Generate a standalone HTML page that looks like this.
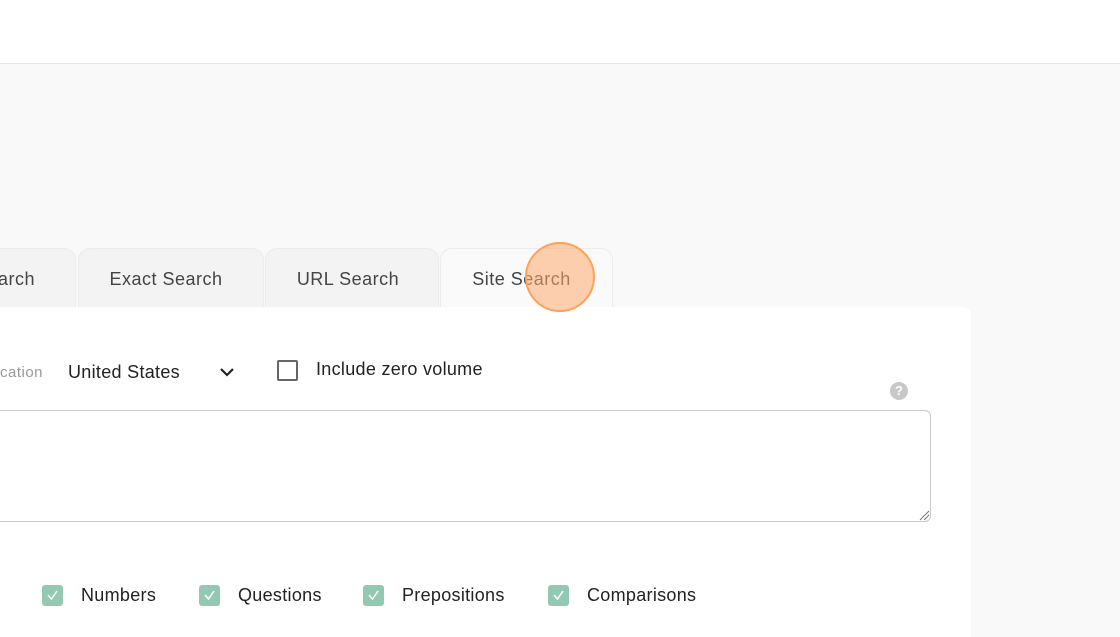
<!DOCTYPE html>
<html><head><style>
body{margin:0;width:1120px;height:626px;overflow:hidden;background:#f9f9f9;font-family:"Liberation Sans",sans-serif;position:relative}
.top{position:absolute;left:0;top:0;width:1120px;height:63px;background:#fff;border-bottom:1px solid #e6e6e6}
.tab{position:absolute;top:248px;height:59px;background:#f3f3f3;border:1px solid #ececec;border-bottom:none;border-radius:12px 12px 0 0;box-sizing:border-box;text-align:center;line-height:60px;font-size:18px;color:#444;letter-spacing:.5px}
.card{position:absolute;left:0;top:307px;width:971px;height:330px;background:#fff;border-radius:0 8px 0 0}
.t{position:absolute;white-space:nowrap}
.cb{position:absolute;top:585px;width:21px;height:21px;background:#93c9b3;border-radius:3px}
.cb svg{position:absolute;left:4px;top:4px}
.lab{position:absolute;top:585px;font-size:18px;color:#222;letter-spacing:.3px}
</style></head><body>
<div class="top"></div>
<div class="tab" style="left:-20px;width:96px;text-align:right;padding-right:40px">arch</div>
<div class="tab" style="left:78px;width:186px;padding-right:10px">Exact Search</div>
<div class="tab" style="left:265px;width:174px;padding-right:8px">URL Search</div>
<div class="tab" style="left:440px;width:173px;background:#fafafa;padding-right:10px">Site Search</div>
<div class="card"></div>
<div class="t" style="left:0;top:364px;font-size:15px;color:#999;letter-spacing:.5px">cation</div>
<div class="t" style="left:68px;top:362px;font-size:18px;color:#222;letter-spacing:.3px">United States</div>
<svg class="t" style="left:219px;top:366px" width="16" height="12"><path d="M2 3l6 6 6-6" stroke="#222" stroke-width="2.2" fill="none"/></svg>
<div class="t" style="left:277px;top:360px;width:17px;height:17px;border:2px solid #666;border-radius:2px"></div>
<div class="t" style="left:316px;top:359px;font-size:18px;color:#222;letter-spacing:.3px">Include zero volume</div>
<div class="t" style="left:890px;top:382px;width:18px;height:18px;border-radius:50%;background:#c8c8c8;color:#fff;font-size:13px;font-weight:bold;text-align:center;line-height:18px">?</div>
<div class="t" style="left:-10px;top:410px;width:939px;height:110px;border:1px solid #c9c9cf;border-radius:6px"></div>
<svg class="t" style="left:918px;top:509px" width="12" height="12"><path d="M2 11L11 2M6 11L11 6" stroke="#777" stroke-width="1"/></svg>
<div class="cb" style="left:42px"><svg width="13" height="13"><path d="M2 6l3.5 4L11 2" stroke="#fff" stroke-width="1.5" fill="none"/></svg></div>
<div class="lab" style="left:81px">Numbers</div>
<div class="cb" style="left:199px"><svg width="13" height="13"><path d="M2 6l3.5 4L11 2" stroke="#fff" stroke-width="1.5" fill="none"/></svg></div>
<div class="lab" style="left:238px">Questions</div>
<div class="cb" style="left:363px"><svg width="13" height="13"><path d="M2 6l3.5 4L11 2" stroke="#fff" stroke-width="1.5" fill="none"/></svg></div>
<div class="lab" style="left:402px">Prepositions</div>
<div class="cb" style="left:548px"><svg width="13" height="13"><path d="M2 6l3.5 4L11 2" stroke="#fff" stroke-width="1.5" fill="none"/></svg></div>
<div class="lab" style="left:587px">Comparisons</div>
<div class="t" style="left:525px;top:242px;width:66px;height:66px;border-radius:50%;background:rgba(255,170,110,.55);border:2px solid #ffa256"></div>
</body></html>
